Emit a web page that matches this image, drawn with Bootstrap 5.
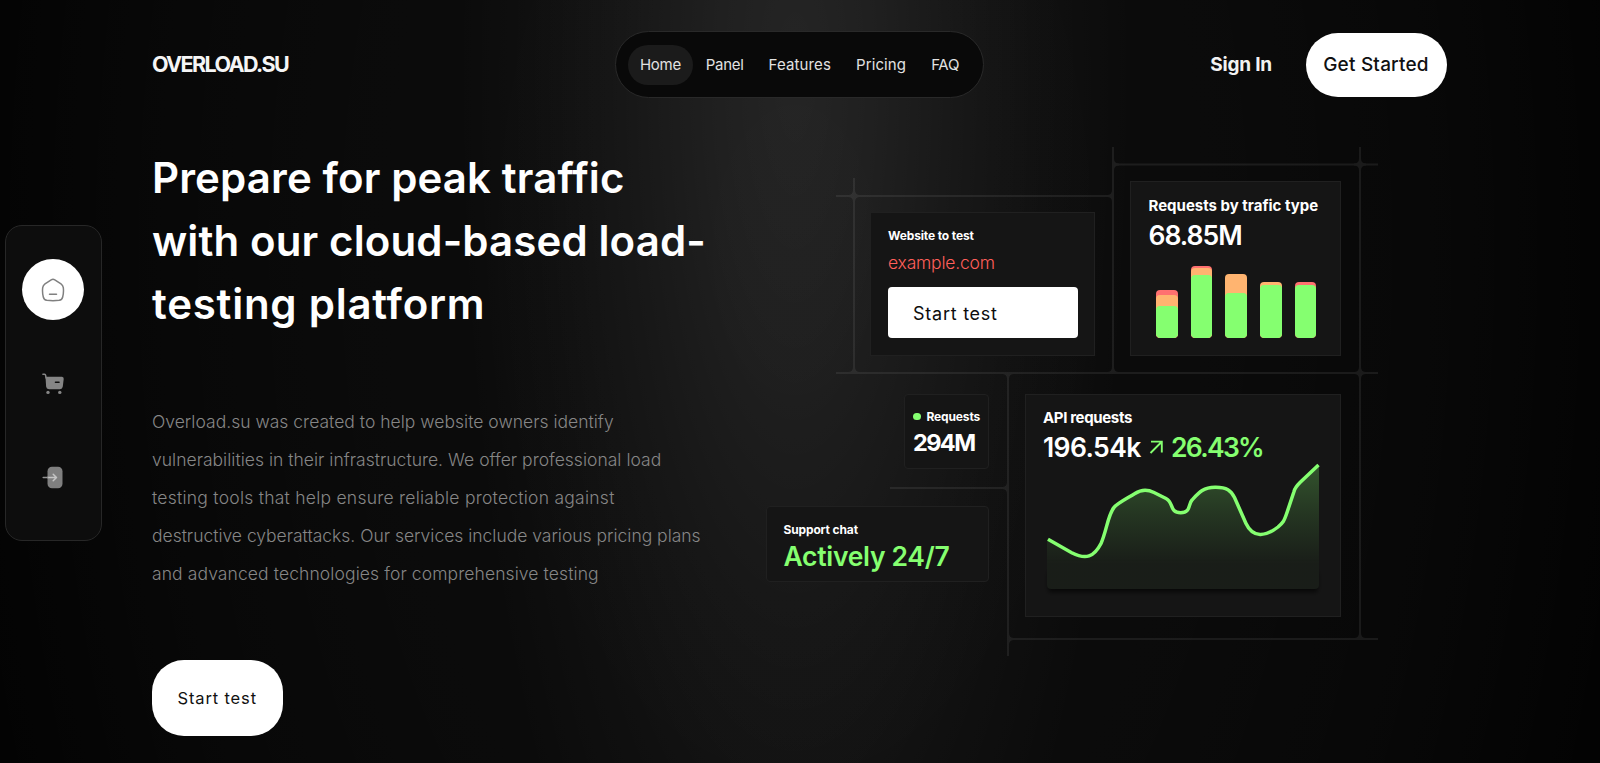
<!DOCTYPE html>
<html lang="en" data-bs-theme="dark">
<head>
<meta charset="utf-8">
<meta name="viewport" content="width=device-width, initial-scale=1">
<title>OVERLOAD.SU</title>
<link rel="stylesheet" href="https://cdn.jsdelivr.net/npm/bootstrap@5.3.0/dist/css/bootstrap.min.css">
<style>
:root{--green:#85ff70;--orange:#ffb470;--red:#ff7070}
body{height:763px;overflow:hidden;color:#fff;font-family:Inter,"Liberation Sans",sans-serif;font-size:16px;
 background:
  radial-gradient(ellipse 340px 1100px at 795px 80px,rgba(255,255,255,.1) 0%,rgba(255,255,255,.082) 23%,rgba(255,255,255,.047) 50%,rgba(255,255,255,.019) 75%,transparent 100%),
  radial-gradient(ellipse 850px 1500px at 795px 250px,rgba(255,255,255,.04) 0%,rgba(255,255,255,.03) 50%,rgba(255,255,255,.018) 75%,transparent 100%),
  #030303}
a{color:inherit;text-decoration:none}
.site-head{height:129px;display:grid;grid-template-columns:1fr auto 1fr;align-items:center;margin:0 1px 0 0}
.brand{font-size:21.5px;font-weight:700;letter-spacing:-1.6px;color:#f5f5f5}
.main-nav{height:67px;width:369px;padding:0 12px;background:#090909;border:1px solid #292929;border-radius:34px;gap:1px}
.main-nav a{height:40px;line-height:40px;padding:0 12px;font-size:15px;border-radius:20px;color:#e2e2e2;letter-spacing:-.3px;white-space:nowrap}
.main-nav a.active{background:#1b1b1b}
.main-nav .wider{letter-spacing:.12px}
.sign{font-size:19px;font-weight:700;letter-spacing:-.2px;color:#f2f2f2;margin-right:34px;padding-top:1px}
.pill{background:#fff;color:#111;border-radius:32px;display:flex;align-items:center;justify-content:center}
.start{width:141px;height:64px;font-size:19px;font-weight:500;letter-spacing:.2px;padding:1px 1px 0 0}
.hero-copy{width:560px;flex:none;padding-top:17px}
h1{font-size:42px;line-height:63px;font-weight:600;letter-spacing:.12px;margin:0;white-space:nowrap}
h1 .loose{letter-spacing:.75px}
.intro{margin:68px 0 67px;font-size:17.5px;line-height:38px;font-weight:300;color:#868686;letter-spacing:.015px;white-space:nowrap}
.intro .loose{letter-spacing:.25px}
.intro .mid{letter-spacing:.1px}
.intro .tight{letter-spacing:-.015px}
.try{width:130.5px;height:76px;font-size:16.5px;letter-spacing:.85px}
.board{width:612px;flex:none;margin-left:54px;padding-top:52px}
.board-lines{position:absolute;left:0;top:0}
.tile{background:#151515;border:1px solid #202020;position:relative;flex:none;padding-left:17px}
.tile.soft{border-radius:4px}
.tag{font-size:12px;line-height:18px;font-weight:700;letter-spacing:-.14px;white-space:nowrap}
.tag-lg{font-size:15px;line-height:22px;font-weight:700;letter-spacing:0;white-space:nowrap}
.figure-lg{font-size:26.5px;line-height:32px;font-weight:600;white-space:nowrap}
.c-green{color:var(--green)}
.site{width:225px;height:143.5px;padding-top:14px}
.domain{font-size:17.5px;line-height:26px;font-weight:300;color:#ff5f5a;letter-spacing:-.2px;margin-top:5px}
.run{width:190px;height:51px;margin-top:11px;background:#fff;color:#0d0d0d;border-radius:4px;font-size:18px;letter-spacing:.75px;padding-left:25px;line-height:53px}
.traffic{width:211px;height:174.5px;padding:13px 0 0 17.500px}
.bars{height:87px;gap:13.2px;padding-left:7.5px}
.bars div{width:21.5px;border-radius:4px;position:relative;overflow:hidden}
.bars i{position:absolute;left:0;right:0;bottom:0;border-radius:4px}
.req{width:85px;height:75px;padding:13px 0 0 8px}
.dot{width:7.5px;height:7.5px;border-radius:50%;background:var(--green)}
.chat{width:223px;height:76px;padding:13.500px 0 0 16.500px}
.api{width:316px;height:223.5px;padding-top:12.500px}
.side{position:absolute;left:5px;top:225px;width:97px;height:316px;background:#0d0d0d;border:1px solid #272727;border-radius:17px;padding:33px 1px 0 0}
.side .on{width:62px;height:61px;border-radius:50%;background:#fff}
</style>
</head>
<body>
<div class="container">
  <header class="site-head">
    <a class="brand" href="#">OVERLOAD.SU</a>
    <nav class="main-nav d-flex align-items-center">
      <a class="active" href="#">Home</a>
      <a href="#">Panel</a>
      <a class="wider" href="#">Features</a>
      <a class="wider" href="#">Pricing</a>
      <a href="#">FAQ</a>
    </nav>
    <div class="d-flex align-items-center justify-content-end">
      <a class="sign" href="#">Sign In</a>
      <a class="pill start" href="#">Get Started</a>
    </div>
  </header>

  <main class="d-flex">
    <section class="hero-copy">
      <h1>Prepare for peak traffic<br>with our cloud-based load-<br><span class="loose">testing platform</span></h1>
      <p class="intro">Overload.su was created to help website owners identify<br>vulnerabilities in their infrastructure. We offer professional load<br><span class="loose">testing tools that help ensure reliable protection against</span><br><span class="tight">destructive cyberattacks. Our services include various pricing plans</span><br><span class="mid">and advanced technologies for comprehensive testing</span></p>
      <a class="pill try" href="#">Start test</a>
    </section>

    <section class="board position-relative">
      <svg class="board-lines" width="612" height="540" viewBox="766 129 612 540">
        <defs>
          <path id="cross" d="M-1-6Q-1-1-6-1V1Q-1 1-1 6H1Q1 1 6 1V-1Q1-1 1-6Z"/>
          <path id="tee" d="M-1-6Q-1-1-6-1V1H6V-1Q1-1 1-6Z"/>
        </defs>
        <g fill="#fff" opacity=".07">
          <path fill="none" stroke="#fff" stroke-width="2" d="M854 178V372M1113 147V372M1360 147V639M1008 374V656M836 196H1113M1113 164.500H1378M836 373H1378M890 488H1008M1008 639H1378"/>
          <use href="#cross" x="854" y="196"/><use href="#cross" x="1360" y="164.500"/><use href="#cross" x="1360" y="373"/>
          <use href="#tee" x="854" y="373"/><use href="#tee" x="1113" y="373"/><use href="#tee" x="1360" y="639"/>
          <use href="#tee" transform="translate(1008 373) rotate(180)"/>
          <use href="#tee" transform="translate(1113 196) rotate(-90)"/><use href="#tee" transform="translate(1008 488) rotate(-90)"/>
          <use href="#tee" transform="translate(1113 164.500) rotate(90)"/><use href="#tee" transform="translate(1008 639) rotate(90)"/>
        </g>
      </svg>

      <div class="d-flex align-items-end justify-content-end" style="padding-right:37px;gap:35px">
        <div class="tile site">
          <div class="tag">Website to test</div>
          <div class="domain">example.com</div>
          <div class="run">Start test</div>
        </div>
        <div class="tile traffic">
          <div class="tag-lg">Requests by trafic type</div>
          <div class="figure-lg" style="letter-spacing:-1px;margin-top:2px">68.85M</div>
          <div class="bars d-flex align-items-end">
            <div style="height:48px;background:var(--red)"><i style="height:43px;background:var(--orange)"></i><i style="height:32.5px;background:var(--green)"></i></div>
            <div style="height:72px;background:var(--red)"><i style="height:70px;background:var(--orange)"></i><i style="height:63px;background:var(--green)"></i></div>
            <div style="height:64px;background:var(--orange)"><i style="height:45px;background:var(--green)"></i></div>
            <div style="height:56px;background:var(--orange)"><i style="height:53px;background:var(--green)"></i></div>
            <div style="height:56px;background:var(--red)"><i style="height:53px;background:var(--green)"></i></div>
          </div>
        </div>
      </div>

      <div class="d-flex" style="margin-top:38px;gap:36px">
        <div class="d-flex flex-column align-items-end" style="gap:37.5px">
          <div class="tile soft req">
            <div class="d-flex align-items-center" style="gap:6px"><span class="dot"></span><span class="tag">Requests</span></div>
            <div style="font-size:23.5px;line-height:28px;font-weight:700;letter-spacing:-1.6px;margin-top:3.5px">294M</div>
          </div>
          <div class="tile soft chat">
            <div class="tag">Support chat</div>
            <div class="figure-lg c-green" style="margin-top:1.5px;letter-spacing:-.3px">Actively 24/7</div>
          </div>
        </div>
        <div class="tile api">
          <div class="tag-lg" style="letter-spacing:-.36px">API requests</div>
          <div class="figure-lg d-flex align-items-center" style="margin-top:2px">
            <span style="letter-spacing:-.6px;width:98px">196.54k</span>
            <svg width="30" height="16" viewBox="0 0 30 16" fill="none" stroke="#85ff70" stroke-width="1.900"><path d="M9.500 14 20.500 3M10 2.600H20.800V13.500"/></svg>
            <span class="c-green" style="letter-spacing:-1.700px">26.43%</span>
          </div>
          <svg class="d-block" width="284" height="144" viewBox="1043 462.500 284 144" fill="none">
            <defs>
              <linearGradient id="fade" x1="0" y1="0" x2="0" y2="1"><stop offset="0" stop-color="#85ff70" stop-opacity=".27"/><stop offset=".4" stop-color="#85ff70" stop-opacity=".14"/><stop offset=".8" stop-color="#85ff70" stop-opacity=".035"/><stop offset="1" stop-color="#85ff70" stop-opacity=".035"/></linearGradient>
              <filter id="drop" x="-5%" y="-10%" width="110%" height="125%"><feGaussianBlur stdDeviation="2"/></filter>
            </defs>
            <rect x="1048" y="570" width="270" height="22" rx="4" fill="#000" fill-opacity=".6" filter="url(#drop)"/>
            <path fill="#151515" d="M1047 560H1319V584.500Q1319 588.500 1315 588.500H1051Q1047 588.500 1047 584.500Z"/>
            <path fill="url(#fade)" d="M1047 538.500L1048.700 539.300L1071.700 552.200C1086 559.500 1094 556.500 1101 543C1107 529 1108 514 1114 507C1120 501 1127 498 1134 494C1141 489 1147 488.500 1154 492L1168 499.300C1173 503 1170 512 1180.700 512.300C1191 512 1187 504 1192 500C1199 492 1204 487 1215 486.700C1227 486.500 1231 490 1234.500 497L1246 523C1253 538 1268 538 1277 527C1282 522 1284 522 1287 512L1295 488L1298 484L1319 464V584.500Q1319 588.500 1315 588.500H1051Q1047 588.500 1047 584.500Z"/>
            <path stroke="#85ff70" stroke-width="3.500" d="M1048 538.800L1071.700 552.200C1086 559.500 1094 556.500 1101 543C1107 529 1108 514 1114 507C1117 503 1127 498 1135 493C1141 489 1148 489 1154 492L1166 498C1174 502 1169 512 1180.700 512.300C1191 512 1188 504 1192 499.500C1199 492 1203 487 1215 486.700C1227 486.500 1231 490 1234.500 497L1246 523C1253 538 1266 536 1278 526.500C1283 522 1284 521 1287 512L1294 491C1295 487 1297 485 1300 482L1318.500 464.500"/>
          </svg>
        </div>
      </div>
    </section>
  </main>
</div>

<aside class="side d-flex flex-column align-items-center">
  <a class="on d-flex align-items-center justify-content-center" href="#" aria-label="Home">
    <svg width="24" height="24" viewBox="0 0 24 24" fill="none" stroke="#808080" stroke-width="1.500" stroke-linejoin="round" stroke-linecap="round"><path d="M10.200 1.800Q12 .7 13.800 1.800L20 5.900Q22 7.300 22.300 9.700C22.700 13 22.500 16 21.700 19Q21 21.900 18.200 22.300Q12 23 5.800 22.300Q3 21.900 2.300 19C1.500 16 1.300 13 1.700 9.700Q2 7.300 4 5.900Z"/><path d="M8.500 16.300H15.500"/></svg>
  </a>
  <a href="#" aria-label="Cart" style="margin-top:53px">
    <svg class="d-block" width="22" height="22" viewBox="0 0 22 22"><path fill="none" stroke="#858585" stroke-width="1.500" stroke-linecap="round" stroke-linejoin="round" d="M.9 1.200H2.500Q3.500 1.300 3.700 2.600L4 5"/><path fill="#858585" fill-rule="evenodd" d="M3.500 3.800H20Q22 4 21.700 6L20.800 13.500Q20.500 16 18 16.200H7Q4.300 16 4.100 13.500ZM13.500 8.500a.8.8 0 0 0 0 1.600h3.500a.8.8 0 0 0 0-1.600z"/><circle cx="6" cy="19.400" r="1.700" fill="#858585"/><circle cx="17.800" cy="19.400" r="1.700" fill="#858585"/></svg>
  </a>
  <a href="#" aria-label="Log in" style="margin-top:71px">
    <svg class="d-block" width="22" height="23" viewBox="0 0 22 23"><rect x="5.500" y=".7" width="15" height="21.500" rx="4.500" fill="#7f7f7f"/><path fill="none" stroke="#c4c4c4" stroke-width="1.500" stroke-linecap="round" stroke-linejoin="round" d="M5.500 11.500H14M11.200 8.200 14.500 11.500 11.200 14.800"/><path stroke="#929292" stroke-width="1.500" stroke-linecap="round" d="M1.200 11.500H5.500"/></svg>
  </a>
</aside>
<script src="https://cdn.jsdelivr.net/npm/bootstrap@5.3.0/dist/js/bootstrap.bundle.min.js"></script>
</body>
</html>
